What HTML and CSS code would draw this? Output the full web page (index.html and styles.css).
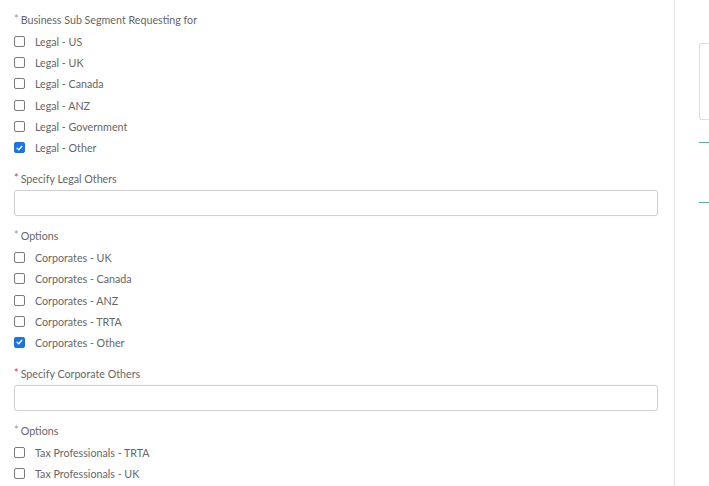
FILE: index.html
```html
<!DOCTYPE html>
<html>
<head>
<meta charset="utf-8">
<link rel="stylesheet" href="styles.css">
</head>
<body>
<div class="page">
  <main class="form">
    <section class="group">
      <div class="label"><span class="star">*</span>Business Sub Segment Requesting for</div>
      <label class="row"><span class="box"></span>Legal - US</label>
      <label class="row"><span class="box"></span>Legal - UK</label>
      <label class="row"><span class="box"></span>Legal - Canada</label>
      <label class="row"><span class="box"></span>Legal - ANZ</label>
      <label class="row"><span class="box"></span>Legal - Government</label>
      <label class="row"><span class="box checked"><svg viewBox="0 0 12 12" width="12" height="12"><path d="M2.8 6.3 L5 8.4 L9.2 3.6" fill="none" stroke="#fff" stroke-width="1.8" stroke-linecap="round" stroke-linejoin="round"/></svg></span>Legal - Other</label>
    </section>
    <section class="group">
      <div class="label field-label"><span class="star req">*</span>Specify Legal Others</div>
      <input class="text" type="text">
    </section>
    <section class="group">
      <div class="label"><span class="star">*</span>Options</div>
      <label class="row"><span class="box"></span>Corporates - UK</label>
      <label class="row"><span class="box"></span>Corporates - Canada</label>
      <label class="row"><span class="box"></span>Corporates - ANZ</label>
      <label class="row"><span class="box"></span>Corporates - TRTA</label>
      <label class="row"><span class="box checked"><svg viewBox="0 0 12 12" width="12" height="12"><path d="M2.8 6.3 L5 8.4 L9.2 3.6" fill="none" stroke="#fff" stroke-width="1.8" stroke-linecap="round" stroke-linejoin="round"/></svg></span>Corporates - Other</label>
    </section>
    <section class="group">
      <div class="label field-label"><span class="star req">*</span>Specify Corporate Others</div>
      <input class="text" type="text">
    </section>
    <section class="group">
      <div class="label"><span class="star">*</span>Options</div>
      <label class="row"><span class="box"></span>Tax Professionals - TRTA</label>
      <label class="row"><span class="box"></span>Tax Professionals - UK</label>
    </section>
  </main>
  <aside class="side">
    <div class="side-box"></div>
    <div class="side-line first"></div>
    <div class="side-line"></div>
  </aside>
</div>
</body>
</html>
```

FILE: styles.css
```css
* { box-sizing: border-box; }
html, body { margin: 0; padding: 0; background: #fff; }
body {
  font-family: Lato, "Liberation Sans", sans-serif;
  font-size: 10.7px;
  color: #666;
  overflow: hidden;
}
.page {
  display: flex;
  height: 486px;
}
.form {
  width: 675px;
  flex: none;
  border-right: 1px solid #e3e3e3;
  padding: 11px 16px 0 14px;
}
.group { margin-bottom: 11.5px; }
.label {
  line-height: 16px;
  height: 16px;
  margin-bottom: 4px;
  white-space: nowrap;
}
.star {
  color: #999;
  margin-right: 2px;
  font-size: 11px;
  vertical-align: 1px;
}
.star.req { color: #d9363e; }
.row {
  display: flex;
  align-items: center;
  height: 21.2px;
  white-space: nowrap;
}
.box {
  width: 11px;
  height: 11px;
  border: 1px solid #7a7a7a;
  border-radius: 2px;
  margin-right: 10px;
  flex: none;
  display: flex;
  align-items: center;
  justify-content: center;
  background: #fff;
}
.box.checked {
  background: #1a73e8;
  border-color: #1a73e8;
}
.box svg { width: 10px; height: 10px; }
.text {
  display: block;
  width: 644px;
  height: 26px;
  border: 1px solid #cfcfcf;
  border-radius: 3px;
  box-shadow: 0 0 3px rgba(0,0,0,0.04);
  background: #fff;
  margin: 4px 0 0;
}
.side {
  flex: 1;
  padding: 43px 0 0 24px;
}
.side-box {
  height: 77px;
  border: 1px solid #ddd;
  border-right: none;
  border-radius: 3px 0 0 3px;
}
.side-line {
  height: 1px;
  background: #5aa9ad;
  margin-top: 59px;
}
.side-line.first { margin-top: 22px; }
```
